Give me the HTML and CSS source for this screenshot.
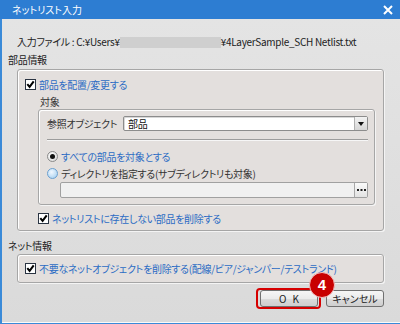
FILE: index.html
```html
<!DOCTYPE html>
<html lang="ja">
<head>
  <meta charset="UTF-8">
  <title>ネットリスト入力</title>
  <link rel="stylesheet" href="styles.css">
</head>
<body>
  <div class="window">
    <div class="titlebar">
      <span class="title">ネットリスト入力</span>
      <svg class="close" width="10" height="10" viewBox="0 0 10 10"><path d="M1 1 L9 9 M9 1 L1 9" stroke="#fff" stroke-width="2"/></svg>
    </div>
    <div class="content">
      <div class="file-row">入力ファイル : C:¥Users¥<span class="redact"></span>¥4LayerSample_SCH Netlist.txt</div>

      <!-- 部品情報 -->
      <div class="group-label">部品情報</div>
      <div class="group parts">
        <div class="check-row">
          <svg class="cb" width="11" height="11" viewBox="0 0 11 11"><rect x="0.5" y="0.5" width="10" height="10" fill="#fff" stroke="#2b3442"/><path d="M2.3 5.2 L4.6 7.9 L8.7 2.4" fill="none" stroke="#000" stroke-width="2"/></svg>
          <span class="blue">部品を配置/変更する</span>
        </div>
        <div class="sub-label">対象</div>
        <div class="group inner">
          <div class="select-row">
            <span class="select-label">参照オブジェクト</span>
            <div class="select">
              <span class="select-text">部品</span>
              <span class="drop"><span class="tri"></span></span>
            </div>
          </div>
          <div class="separator"></div>
          <div class="radio-row first">
            <span class="radio on"></span>
            <span class="blue">すべての部品を対象とする</span>
          </div>
          <div class="radio-row">
            <span class="radio"></span>
            <span>ディレクトリを指定する(サブディレクトリも対象)</span>
          </div>
          <div class="path-input">
            <span class="path-text"></span>
            <span class="dots"><svg width="9" height="3" viewBox="0 0 9 3"><rect x="0" y="0" width="2" height="2" fill="#222"/><rect x="3.5" y="0" width="2" height="2" fill="#222"/><rect x="7" y="0" width="2" height="2" fill="#222"/></svg></span>
          </div>
        </div>
        <div class="check-row indent">
          <svg class="cb" width="11" height="11" viewBox="0 0 11 11"><rect x="0.5" y="0.5" width="10" height="10" fill="#fff" stroke="#2b3442"/><path d="M2.3 5.2 L4.6 7.9 L8.7 2.4" fill="none" stroke="#000" stroke-width="2"/></svg>
          <span class="blue">ネットリストに存在しない部品を削除する</span>
        </div>
      </div>

      <!-- ネット情報 -->
      <div class="group-label net">ネット情報</div>
      <div class="group nets">
        <div class="check-row">
          <svg class="cb" width="11" height="11" viewBox="0 0 11 11"><rect x="0.5" y="0.5" width="10" height="10" fill="#fff" stroke="#2b3442"/><path d="M2.3 5.2 L4.6 7.9 L8.7 2.4" fill="none" stroke="#000" stroke-width="2"/></svg>
          <span class="blue">不要なネットオブジェクトを削除する(配線/ビア/ジャンパー/テストランド)</span>
        </div>
      </div>

      <div class="buttons">
        <div class="highlight">
          <button class="btn ok">O K</button>
          <span class="badge">4</span>
        </div>
        <button class="btn cancel">キャンセル</button>
      </div>
    </div>
  </div>
</body>
</html>
```

FILE: styles.css
```css
/* Reset */
html, body {
  margin: 0;
  padding: 0;
}
body {
  font-family: "Noto Sans CJK JP", "Noto Sans", sans-serif;
  font-size: 10px;
  font-feature-settings: "palt";
  letter-spacing: -0.3px;
  color: #333;
  background: #dedede;
}
.window {
  width: 400px;
  height: 324px;
  display: flex;
  flex-direction: column;
}
/* Barra de título */
.titlebar {
  height: 19px;
  flex: none;
  background: #2d7dd2;
  color: #fff;
  display: flex;
  align-items: center;
  justify-content: space-between;
  padding: 0 7px 0 12px;
  letter-spacing: 0;
}
.title {
  line-height: 19px;
}
.content {
  flex: 1;
  border-left: 2px solid #3a8ad8;
  border-bottom: 1px solid #3a8ad8;
  box-shadow: inset 0 -1px 0 #fafafa;
  background: linear-gradient(#e4e4e4, #dadada);
  padding: 15px 16px 0 15px;
}
.file-row {
  height: 16px;
  line-height: 16px;
  color: #222;
  white-space: nowrap;
}
.redact {
  display: inline-block;
  width: 101px;
  height: 11px;
  background: #cfcfcf;
  vertical-align: -2px;
}
.group-label {
  height: 16px;
  line-height: 16px;
  margin: 2px 0 1px -9px;
  color: #222;
}
.group-label.net {
  margin-top: 7px;
  margin-bottom: 0;
}
/* Cuadros de grupo */
.group {
  border: 1px solid #a6a6a6;
  border-radius: 3px;
  background: #e3dfdd;
  box-shadow: inset 1px 1px 0 #fff, 1px 1px 0 #f4f4f4;
}
.parts {
  padding: 7px 0 5px 0;
}
.nets {
  padding: 6px 0 7px 0;
}
.inner {
  margin: 0 8px 0 20px;
  padding: 6px 6px 6px 8px;
}
.check-row {
  height: 14px;
  display: flex;
  align-items: center;
  padding-left: 7px;
  white-space: nowrap;
}
.check-row.indent {
  margin-top: 6px;
  padding-left: 20px;
}
.cb {
  flex: none;
  margin-right: 3px;
}
.blue {
  color: #2c6cc4;
}
.sub-label {
  height: 14px;
  line-height: 14px;
  margin: 4px 0 0 22px;
  color: #333;
}
.select-row {
  display: flex;
  align-items: center;
  height: 15px;
}
.select-label {
  width: 76px;
  flex: none;
  white-space: nowrap;
}
.select {
  flex: 1;
  height: 15px;
  box-sizing: border-box;
  display: flex;
  border: 1px solid #8c8c8c;
  border-radius: 2px;
  background: #fff;
  box-shadow: inset 1px 1px 0 #d8d8d8;
}
.select-text {
  flex: 1;
  line-height: 13px;
  padding-left: 4px;
  color: #111;
}
.drop {
  width: 12px;
  border-left: 1px solid #b0b0b0;
  background: linear-gradient(#f2f2f2, #d6d6d6);
  display: flex;
  align-items: center;
  justify-content: center;
}
.tri {
  width: 0;
  height: 0;
  border-left: 3px solid transparent;
  border-right: 3px solid transparent;
  border-top: 4px solid #111;
}
.separator {
  height: 1px;
  margin-top: 8px;
  background: #9c9c9c;
  box-shadow: 0 1px 0 #f6f6f6;
}
.radio-row {
  height: 14px;
  display: flex;
  align-items: center;
  margin-top: 3px;
  white-space: nowrap;
}
.radio-row.first {
  margin-top: 9px;
}
.radio {
  width: 9px;
  height: 9px;
  flex: none;
  margin-right: 3px;
  border-radius: 50%;
  border: 1px solid #6b9fcf;
  background: radial-gradient(circle at 40% 35%, #f2f8ff, #9ccbee);
  position: relative;
}
.radio.on {
  border-color: #8a8a8a;
  background: radial-gradient(circle at 40% 35%, #ffffff, #d4d4d4);
}
.radio.on::after {
  content: "";
  position: absolute;
  left: 2px;
  top: 2px;
  width: 5px;
  height: 5px;
  border-radius: 50%;
  background: #111;
}
.path-input {
  height: 16px;
  box-sizing: border-box;
  margin: 2px 0 0 13px;
  display: flex;
  border: 1px solid #a0a0a0;
  border-radius: 2px;
  background: #f0f0f0;
}
.path-text {
  flex: 1;
}
.dots {
  width: 12px;
  border-left: 1px solid #a8a8a8;
  background: linear-gradient(#fafafa, #e2e2e2);
  display: flex;
  align-items: center;
  justify-content: center;
}
/* Botones */
.buttons {
  display: flex;
  justify-content: flex-end;
  align-items: flex-start;
  margin-top: 5px;
}
.highlight {
  position: relative;
  display: flex;
  border: 2px solid #d60000;
  border-radius: 4px;
  padding: 0 1px 0 2px;
}
.btn {
  width: 58px;
  height: 17px;
  padding: 0;
  border: 1px solid #707070;
  border-radius: 3px;
  background: linear-gradient(#f6f6f6, #ebebeb 50%, #dcdcdc 50%, #cfcfcf);
  font-family: "Noto Sans CJK JP", "Noto Sans", sans-serif;
  font-size: 10px;
  font-feature-settings: "palt";
  line-height: 15px;
  color: #222;
}
.ok {
  letter-spacing: 2px;
  padding-left: 2px;
}
.cancel {
  margin-left: 5px;
  margin-top: 2px;
}
.badge {
  position: absolute;
  left: 51px;
  top: -18px;
  width: 24px;
  height: 24px;
  border-radius: 50%;
  border: 1px solid #f3c0c0;
  background: #c80000;
  color: #fff;
  font-family: "Liberation Sans", sans-serif;
  font-weight: bold;
  font-size: 15px;
  line-height: 24px;
  text-align: center;
  letter-spacing: 0;
}
```
